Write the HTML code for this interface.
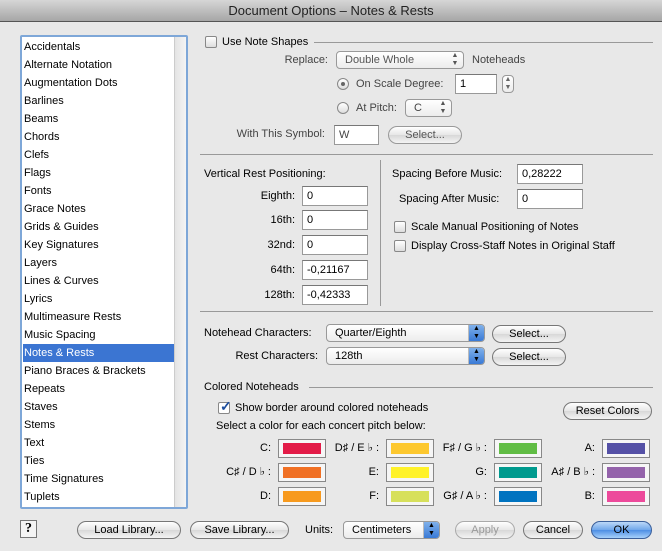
<!DOCTYPE html>
<html><head><meta charset="utf-8"><style>
*{box-sizing:border-box;margin:0;padding:0}
body{width:662px;height:551px;background:#e8e8e8;font-family:"Liberation Sans",sans-serif;font-size:11px;color:#000;position:relative;overflow:hidden}
.a{position:absolute;white-space:nowrap;line-height:14px}
.r{text-align:right}
.tb{position:absolute;left:0;top:0;width:662px;height:22px;background:linear-gradient(#d6d6d6,#a6a6a6);border-bottom:1px solid #555;text-align:center;font-size:13px;line-height:22px;color:#222}
.list{position:absolute;left:20px;top:35px;width:168px;height:474px;border:2px solid #7ea7d8;border-radius:2px;background:#fff}
.sb{position:absolute;right:0;top:0;width:12px;height:100%;background:linear-gradient(90deg,#e4e4e4,#f4f4f4);border-left:1px solid #ccc}
.it{position:absolute;left:1px;width:151px;height:18px;line-height:18px;padding-left:1px;margin-top:1px}
.sel{background:#3b75d2;color:#fff}
.in{position:absolute;background:#fff;border:1px solid #999;border-top-color:#777;height:20px;line-height:18px;padding-left:4px}
.btn{position:absolute;height:18px;border:1px solid #777;border-radius:9px;background:linear-gradient(#fff,#e6e6e6 50%,#d8d8d8 51%,#f4f4f4);text-align:center;line-height:16px}
.pop{position:absolute;height:18px;border:1px solid #999;border-radius:4px;background:linear-gradient(#fff,#ececec);line-height:16px;padding-left:8px}
.pop .ar{position:absolute;right:0;top:0;width:16px;height:16px;border-left:1px solid #bbb;font-size:7px;line-height:8px;text-align:center;color:#555}
.popb .ar{background:linear-gradient(#7fb0ea,#3a7ad6);color:#000;border-radius:0 3px 3px 0}
.cb{position:absolute;width:12px;height:12px;border:1px solid #888;border-radius:2px;background:linear-gradient(#fff,#ddd)}
.rd{position:absolute;width:12px;height:12px;border:1px solid #888;border-radius:50%;background:linear-gradient(#fff,#ddd)}
.hl{position:absolute;height:1px;background:#999}
.vl{position:absolute;width:1px;background:#999}
.w{position:absolute;width:48px;height:19px;border:1px solid #888;background:#f6f6f6;padding:3px 4px}
.w div{width:100%;height:100%}
</style></head><body>
<div class="tb">Document Options – Notes &amp; Rests</div>

<div class="list"><div class="sb"></div>
<div class="it" style="top:0">Accidentals</div>
<div class="it" style="top:18px">Alternate Notation</div>
<div class="it" style="top:36px">Augmentation Dots</div>
<div class="it" style="top:54px">Barlines</div>
<div class="it" style="top:72px">Beams</div>
<div class="it" style="top:90px">Chords</div>
<div class="it" style="top:108px">Clefs</div>
<div class="it" style="top:126px">Flags</div>
<div class="it" style="top:144px">Fonts</div>
<div class="it" style="top:162px">Grace Notes</div>
<div class="it" style="top:180px">Grids &amp; Guides</div>
<div class="it" style="top:198px">Key Signatures</div>
<div class="it" style="top:216px">Layers</div>
<div class="it" style="top:234px">Lines &amp; Curves</div>
<div class="it" style="top:252px">Lyrics</div>
<div class="it" style="top:270px">Multimeasure Rests</div>
<div class="it" style="top:288px">Music Spacing</div>
<div class="it sel" style="top:306px">Notes &amp; Rests</div>
<div class="it" style="top:324px">Piano Braces &amp; Brackets</div>
<div class="it" style="top:342px">Repeats</div>
<div class="it" style="top:360px">Staves</div>
<div class="it" style="top:378px">Stems</div>
<div class="it" style="top:396px">Text</div>
<div class="it" style="top:414px">Ties</div>
<div class="it" style="top:432px">Time Signatures</div>
<div class="it" style="top:450px">Tuplets</div>
</div>

<div class="cb" style="left:205px;top:36px"></div>
<div class="a" style="left:222px;top:35px">Use Note Shapes</div>
<div class="hl" style="left:314px;top:42px;width:339px"></div>
<div class="a r" style="left:250px;top:53px;width:78px;color:#444">Replace:</div>
<div class="pop" style="left:336px;top:51px;width:128px;color:#555">Double Whole<div class="ar" style="border:none">▲<br>▼</div></div>
<div class="a" style="left:472px;top:53px;color:#444">Noteheads</div>
<div class="rd" style="left:337px;top:78px"><div style="position:absolute;left:3px;top:3px;width:4px;height:4px;border-radius:50%;background:#666"></div></div>
<div class="a" style="left:356px;top:77px;color:#444">On Scale Degree:</div>
<div class="in" style="left:455px;top:74px;width:42px">1</div>
<div class="pop" style="left:502px;top:75px;width:12px;height:18px;padding:0"><div style="font-size:7px;line-height:8px;text-align:center;color:#666">▲<br>▼</div></div>
<div class="rd" style="left:337px;top:102px"></div>
<div class="a" style="left:356px;top:101px;color:#444">At Pitch:</div>
<div class="pop" style="left:405px;top:99px;width:47px;color:#444">C<div class="ar" style="border:none">▲<br>▼</div></div>
<div class="a r" style="left:200px;top:127px;width:125px;color:#444">With This Symbol:</div>
<div class="in" style="left:334px;top:125px;width:45px;color:#444">W</div>
<div class="btn" style="left:388px;top:126px;width:74px;color:#555;border-color:#999">Select...</div>
<div class="hl" style="left:200px;top:154px;width:453px"></div>

<div class="a" style="left:204px;top:167px">Vertical Rest Positioning:</div>
<div class="a r" style="left:220px;top:189px;width:75px">Eighth:</div>
<div class="in" style="left:302px;top:186px;width:66px">0</div>
<div class="a r" style="left:220px;top:213px;width:75px">16th:</div>
<div class="in" style="left:302px;top:210px;width:66px">0</div>
<div class="a r" style="left:220px;top:238px;width:75px">32nd:</div>
<div class="in" style="left:302px;top:235px;width:66px">0</div>
<div class="a r" style="left:220px;top:263px;width:75px">64th:</div>
<div class="in" style="left:302px;top:260px;width:66px">-0,21167</div>
<div class="a r" style="left:220px;top:288px;width:75px">128th:</div>
<div class="in" style="left:302px;top:285px;width:66px">-0,42333</div>
<div class="vl" style="left:380px;top:160px;height:146px"></div>
<div class="a" style="left:392px;top:167px">Spacing Before Music:</div>
<div class="in" style="left:517px;top:164px;width:66px">0,28222</div>
<div class="a" style="left:399px;top:192px">Spacing After Music:</div>
<div class="in" style="left:517px;top:189px;width:66px">0</div>
<div class="cb" style="left:394px;top:221px"></div>
<div class="a" style="left:411px;top:220px">Scale Manual Positioning of Notes</div>
<div class="cb" style="left:394px;top:240px"></div>
<div class="a" style="left:411px;top:239px">Display Cross-Staff Notes in Original Staff</div>
<div class="hl" style="left:200px;top:311px;width:453px"></div>

<div class="a" style="left:204px;top:326px">Notehead Characters:</div>
<div class="pop popb" style="left:326px;top:324px;width:159px">Quarter/Eighth<div class="ar">▲<br>▼</div></div>
<div class="btn" style="left:492px;top:325px;width:74px">Select...</div>
<div class="a r" style="left:204px;top:349px;width:114px">Rest Characters:</div>
<div class="pop popb" style="left:326px;top:347px;width:159px">128th<div class="ar">▲<br>▼</div></div>
<div class="btn" style="left:492px;top:348px;width:74px">Select...</div>

<div class="a" style="left:204px;top:380px">Colored Noteheads</div>
<div class="hl" style="left:309px;top:387px;width:344px"></div>
<div class="cb" style="left:218px;top:402px;background:#fff"><div style="position:absolute;left:1px;top:-5px;font-size:14px;font-weight:bold;color:#1d4e9e">✓</div></div>
<div class="a" style="left:235px;top:401px">Show border around colored noteheads</div>
<div class="btn" style="left:563px;top:402px;width:89px">Reset Colors</div>
<div class="a" style="left:216px;top:419px">Select a color for each concert pitch below:</div>

<div class="a r" style="left:200px;top:441px;width:71px">C:</div><div class="w" style="left:278px;top:439px"><div style="background:#e31c48"></div></div>
<div class="a r" style="left:200px;top:465px;width:71px">C♯ / D ♭ :</div><div class="w" style="left:278px;top:463px"><div style="background:#f07024"></div></div>
<div class="a r" style="left:200px;top:489px;width:71px">D:</div><div class="w" style="left:278px;top:487px"><div style="background:#f79a1e"></div></div>
<div class="a r" style="left:320px;top:441px;width:59px">D♯ / E ♭ :</div><div class="w" style="left:386px;top:439px"><div style="background:#fdc82f"></div></div>
<div class="a r" style="left:320px;top:465px;width:59px">E:</div><div class="w" style="left:386px;top:463px"><div style="background:#fff22a"></div></div>
<div class="a r" style="left:320px;top:489px;width:59px">F:</div><div class="w" style="left:386px;top:487px"><div style="background:#d7e05b"></div></div>
<div class="a r" style="left:430px;top:441px;width:57px">F♯ / G ♭ :</div><div class="w" style="left:494px;top:439px"><div style="background:#61bd45"></div></div>
<div class="a r" style="left:430px;top:465px;width:57px">G:</div><div class="w" style="left:494px;top:463px"><div style="background:#009a8e"></div></div>
<div class="a r" style="left:430px;top:489px;width:57px">G♯ / A ♭ :</div><div class="w" style="left:494px;top:487px"><div style="background:#0073c0"></div></div>
<div class="a r" style="left:540px;top:441px;width:55px">A:</div><div class="w" style="left:602px;top:439px"><div style="background:#5551a6"></div></div>
<div class="a r" style="left:540px;top:465px;width:55px">A♯ / B ♭ :</div><div class="w" style="left:602px;top:463px"><div style="background:#9463ab"></div></div>
<div class="a r" style="left:540px;top:489px;width:55px">B:</div><div class="w" style="left:602px;top:487px"><div style="background:#ed4a9b"></div></div>

<div style="position:absolute;left:20px;top:520px;width:17px;height:18px;border:1px solid #777;background:#f4f4f4;text-align:center;font:bold 14px/16px 'Liberation Serif',serif">?</div>
<div class="btn" style="left:77px;top:521px;width:104px">Load Library...</div>
<div class="btn" style="left:190px;top:521px;width:99px">Save Library...</div>
<div class="a" style="left:305px;top:523px">Units:</div>
<div class="pop popb" style="left:343px;top:521px;width:97px">Centimeters<div class="ar">▲<br>▼</div></div>
<div class="btn" style="left:455px;top:521px;width:60px;color:#999;border-color:#aaa">Apply</div>
<div class="btn" style="left:523px;top:521px;width:60px">Cancel</div>
<div class="btn" style="left:591px;top:521px;width:61px;background:linear-gradient(#bcd8f8,#6fa6ea 50%,#4d8ee4 51%,#a6d0fb);border-color:#3b5f9a">OK</div>
</body></html>
